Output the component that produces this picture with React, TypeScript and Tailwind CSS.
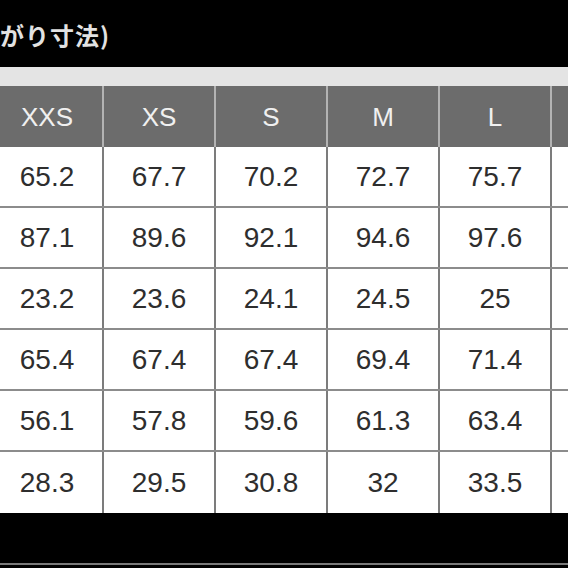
import React from "react";

const sizes = ["XXS", "XS", "S", "M", "L", ""];
const rows: string[][] = [
  ["65.2", "67.7", "70.2", "72.7", "75.7", ""],
  ["87.1", "89.6", "92.1", "94.6", "97.6", ""],
  ["23.2", "23.6", "24.1", "24.5", "25", ""],
  ["65.4", "67.4", "67.4", "69.4", "71.4", ""],
  ["56.1", "57.8", "59.6", "61.3", "63.4", ""],
  ["28.3", "29.5", "30.8", "32", "33.5", ""],
];

export default function App() {
  return (
    <div className="w-[568px] h-[568px] bg-black overflow-hidden flex flex-col">
      <div className="h-[67px] shrink-0 flex items-center pt-[3px]">
        <span
          className="text-[24px] font-bold text-[#e2e2e2] leading-none tracking-[1px]"
          style={{ fontFamily: '"Noto Sans CJK JP", "Noto Sans", sans-serif' }}
        >
          がり寸法)
        </span>
      </div>
      <div className="h-[19px] shrink-0 bg-[#e4e4e4]" />
      <div
        className="ml-[-8px] flex flex-col"
        style={{ fontFamily: '"Liberation Sans", Arial, sans-serif' }}
      >
        <div className="flex h-[61px] bg-[#6c6c6c]">
          {sizes.map((s, i) => (
            <div
              key={i}
              className="w-[112px] shrink-0 h-full border-r-2 border-[#b3b3b3] flex items-center justify-center text-[26px] text-[#f0f0f0] pt-[1px]"
            >
              {s}
            </div>
          ))}
        </div>
        {rows.map((r, ri) => (
          <div
            key={ri}
            className={`flex h-[61px] bg-white ${ri < rows.length - 1 ? "border-b-2 border-[#8c8c8c]" : ""}`}
          >
            {r.map((v, ci) => (
              <div
                key={ci}
                className="w-[112px] shrink-0 h-full border-r-2 border-[#7c7c7c] flex items-center justify-center text-[28px] text-[#2e2e2e]"
              >
                {v}
              </div>
            ))}
          </div>
        ))}
      </div>
      <div className="h-[51px] shrink-0 pt-[50px]">
        <div className="h-[2px] bg-[#7a7a7a]" />
      </div>
    </div>
  );
}
